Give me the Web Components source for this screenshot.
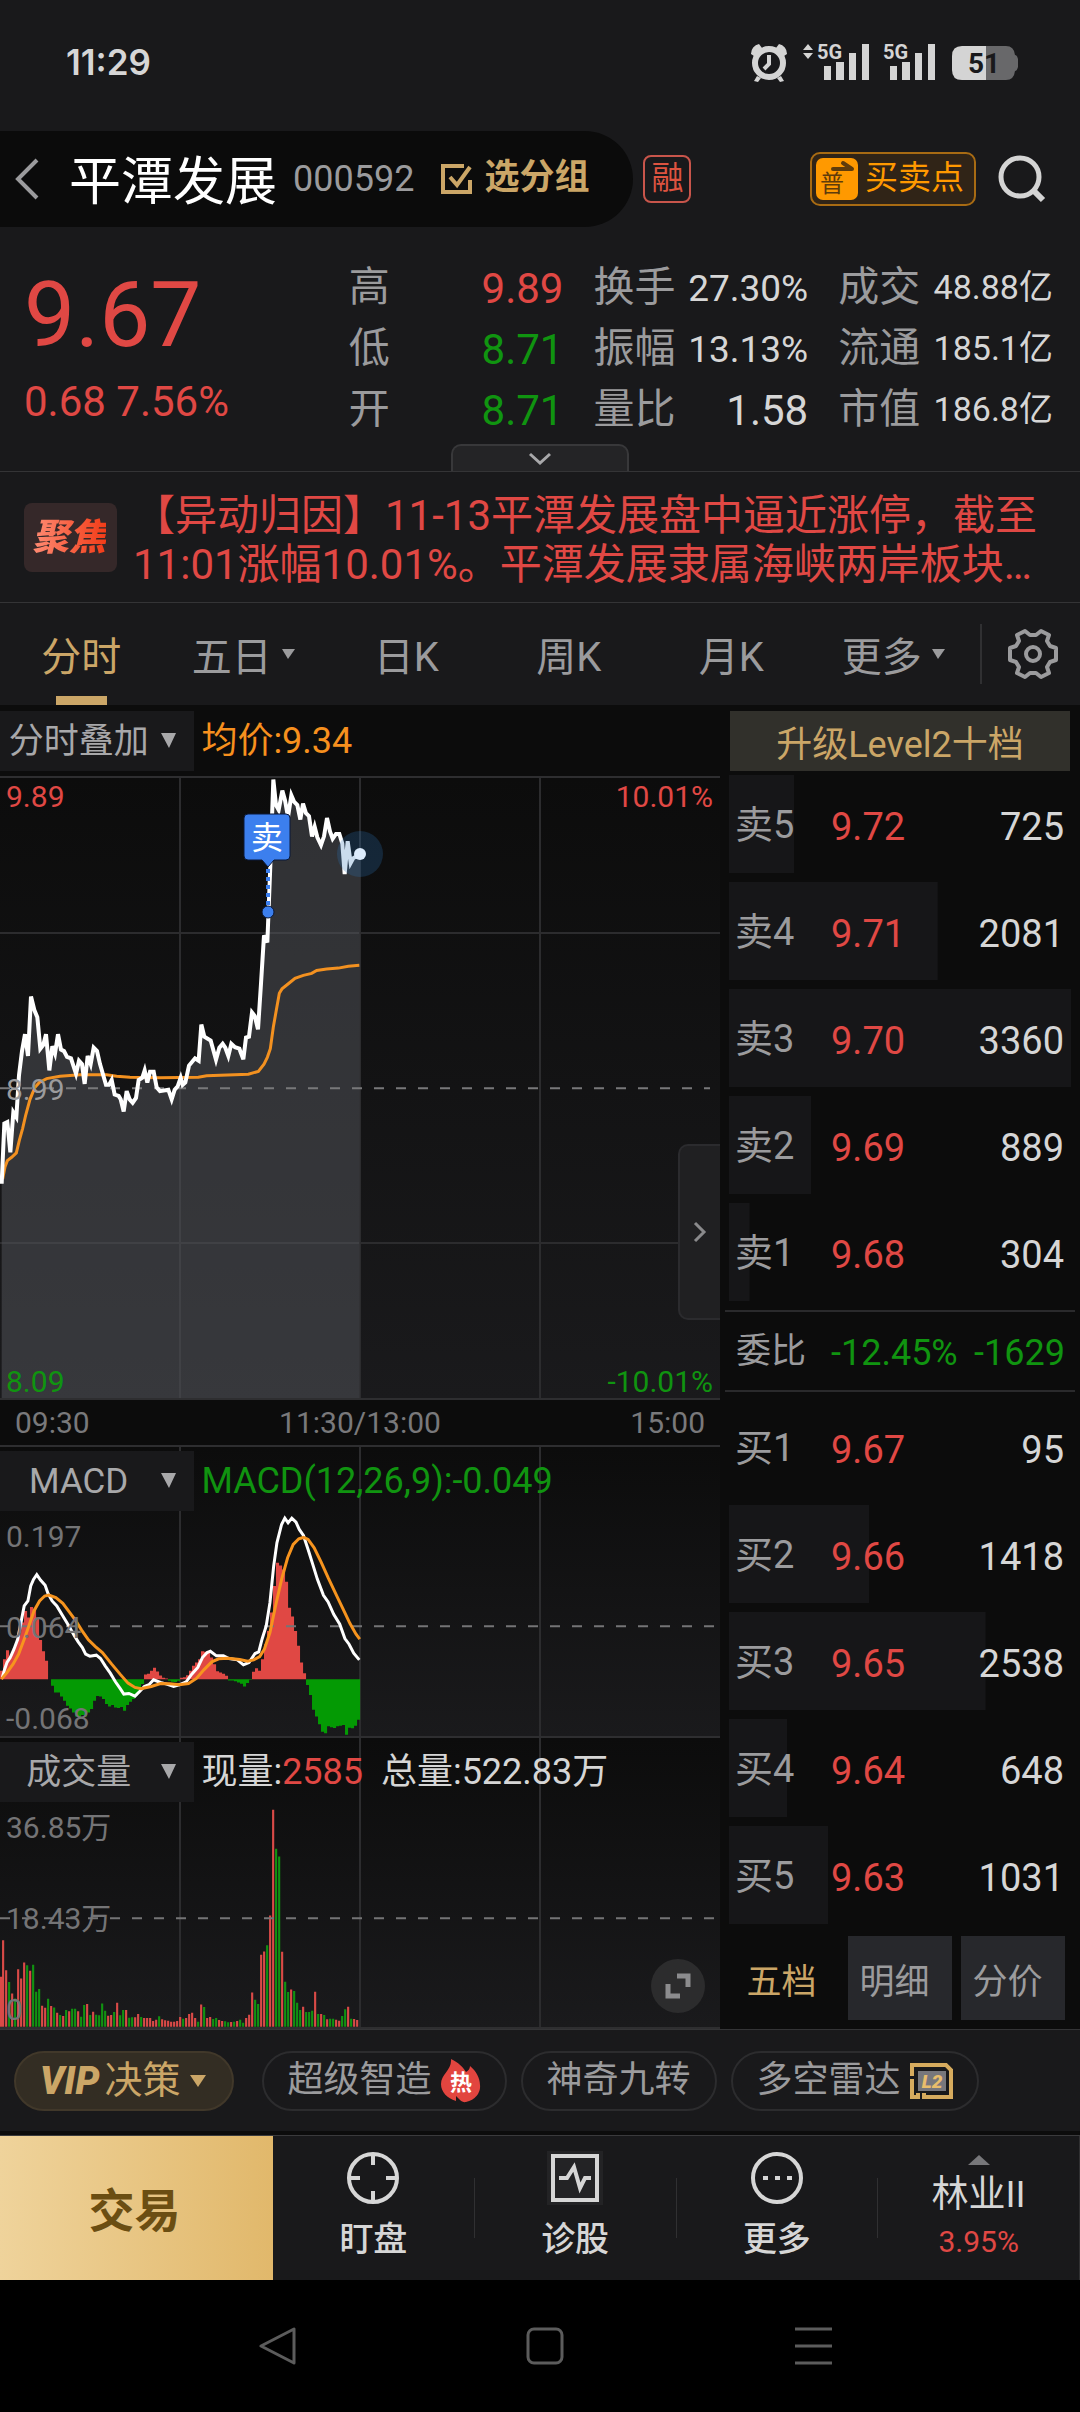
<!DOCTYPE html>
<html lang="zh-CN">
<head>
<meta charset="utf-8">
<meta name="viewport" content="width=device-width, initial-scale=1">
<title>平潭发展 000592</title>
<style>
    html, body {
        margin: 0;
        background: #000;
    }
    body {
        font-family: Roboto, "Noto Sans CJK SC", sans-serif;
        font-size: 36px;
        color: #9b9b9d;
        --panel: #19191b;
        --dark: #0c0c0c;
        --line: #343436;
        --up: #e04844;
        --down: #109410;
        --gold: #cba667;
        --light: #d6d6d6;
    }
</style>
</head>
<body>
<stock-app></stock-app>

<script>
// Base class: clones the markup of the subclass into an open shadow root
class BaseElement extends HTMLElement {
    constructor() {
        super();
        const template = document.createElement('template');
        template.innerHTML = `
            <style>
                * { box-sizing: border-box; }
                button, select {
                    font: inherit;
                    color: inherit;
                    background: none;
                    border: 0;
                    padding: 0;
                    margin: 0;
                }
                svg { display: block; flex: none; }
                .up { color: var(--up); }
                .down { color: var(--down); }
            </style>` + this.markup();
        this.attachShadow({ mode: 'open' });
        this.shadowRoot.appendChild(template.content.cloneNode(true));
    }

    attr(name) {
        return this.getAttribute(name) || '';
    }
}

class StatusBar extends BaseElement {
    markup() {
        return `
            <style>
                :host {
                    display: flex;
                    align-items: center;
                    height: 131px;
                    padding: 0 62px 8px 66px;
                    background: var(--panel);
                    color: var(--light);
                }
                time {
                    flex: 1;
                    font: 600 35px Inter, sans-serif;
                }
            </style>
            <time>11:29</time>
            <svg width="268" height="42" viewBox="750 41 268 42" fill="#d4d4d4">
                <circle cx="769" cy="63" r="14" fill="none" stroke="#d4d4d4" stroke-width="6"/>
                <path d="M751 54a10 10 0 0 1 8-10l3 4-8 8zM787 54a10 10 0 0 0-8-10l-3 4 8 8zM757 76l4 2-3 4-4-1zM781 76l-4 2 3 4 4-1z"/>
                <path d="M769 55v9l-5 5" fill="none" stroke="#d4d4d4" stroke-width="4"/>
                <path d="M803 50l5-6 5 6zM803 53l5 6 5-6z"/>
                <text x="817" y="59" font-family="Roboto" font-weight="700" font-size="20">5G</text>
                <path d="M824 66h7v14h-7zM836 62h8v18h-8zM849 53h7v27h-7zM862 44h7v36h-7z"/>
                <text x="883" y="59" font-family="Roboto" font-weight="700" font-size="20">5G</text>
                <path d="M890 66h7v14h-7zM902 62h8v18h-8zM915 53h7v27h-7zM928 44h7v36h-7z"/>
                <path d="M986 46h20q8 0 9 9 2 0 3 4v8q-1 4-3 4-1 9-9 9h-20z" fill="#68686a"/>
                <path d="M986 46h-24q-10 0-10 10v14q0 10 10 10h24z"/>
                <text x="968" y="73" font-family="Roboto" font-weight="700" font-size="28" fill="#19191b">51</text>
            </svg>`;
    }
}

class StockHeader extends BaseElement {
    markup() {
        return `
            <style>
                :host {
                    display: flex;
                    align-items: center;
                    height: 96px;
                    padding-right: 34px;
                    background: var(--panel);
                }
                .pill {
                    display: flex;
                    align-items: center;
                    height: 96px;
                    padding: 0 44px 0 14px;
                    background: #0b0b0b;
                    border-radius: 0 48px 48px 0;
                }
                h1 {
                    margin: 0 16px 0 29px;
                    padding-bottom: 4px;
                    font-size: 52px;
                    font-weight: 400;
                    color: #fff;
                }
                .group {
                    display: flex;
                    align-items: center;
                    gap: 12px;
                    margin-left: 27px;
                    font-weight: 700;
                    font-size: 35px;
                    line-height: 46px;
                    padding-bottom: 2px;
                    color: var(--gold);
                }
                .margin {
                    width: 48px;
                    height: 48px;
                    margin-left: 10px;
                    line-height: 42px;
                    font-size: 32px;
                    text-align: center;
                    color: #dd5340;
                    border: 2px solid #c8554b;
                    border-radius: 8px;
                }
                .points {
                    display: flex;
                    align-items: center;
                    gap: 7px;
                    height: 54px;
                    margin: 0 22px 0 auto;
                    padding: 0 10px 0 4px;
                    font-size: 33px;
                    line-height: 46px;
                    color: #ff9900;
                    background: #302417;
                    border: 2px solid #a86b13;
                    border-radius: 10px;
                }
                .points span { padding-bottom: 3px; }
            </style>
            <div class="pill">
                <button aria-label="返回">
                    <svg width="26" height="42" fill="none" stroke="#9b9b9d" stroke-width="4"><path d="M23 2L4 21l19 19"/></svg>
                </button>
                <h1>平潭发展</h1>
                <span>000592</span>
                <button class="group">
                    <svg width="31" height="31" fill="none" stroke="#cba667" stroke-width="4"><path d="M23 3H2v26h27V17M9 14l7 8L29 4"/></svg>
                    选分组
                </button>
            </div>
            <span class="margin">融</span>
            <button class="points">
                <svg width="42" height="42">
                    <rect width="42" height="42" rx="7" fill="#ff9900"/>
                    <path d="M17 11h19L27 5" fill="none" stroke="#5f3c0b" stroke-width="4" stroke-linecap="round" stroke-linejoin="round"/>
                    <text x="4" y="34" font-family="Noto Sans CJK SC" font-size="24" fill="#5f3c0b">普</text>
                </svg>
                <span>买卖点</span>
            </button>
            <button aria-label="搜索">
                <svg width="48" height="48" fill="none" stroke="#d4d4d4" stroke-width="5"><circle cx="22" cy="22" r="19"/><path d="M35 35l10 10" stroke-width="6"/></svg>
            </button>`;
    }
}

class QuoteCell extends BaseElement {
    markup() {
        return `
            <style>
                :host {
                    display: flex;
                    justify-content: space-between;
                    align-items: center;
                    height: 61px;
                    font-size: 41px;
                    line-height: 48px;
                    white-space: nowrap;
                }
                .label { padding-bottom: 4px; }
                .value { color: var(--light); font-size: 42px; }
                .value.medium { font-size: 37px; }
                .value.small { font-size: 34px; padding-bottom: 4px; }
                .value.up { color: var(--up); }
                .value.down { color: var(--down); }
            </style>
            <span class="label">${this.attr('label')}</span>
            <span class="value ${this.attr('kind')}"><slot></slot></span>`;
    }
}

class QuotePanel extends BaseElement {
    markup() {
        return `
            <style>
                :host {
                    display: block;
                    padding-top: 31px;
                    background: var(--panel);
                    border-bottom: 1px solid var(--line);
                }
                .grid {
                    display: grid;
                    grid-template-columns: 295fr 215fr 215fr 215fr;
                    gap: 30px;
                    padding: 0 27px 0 24px;
                }
                .price {
                    padding-top: 12px;
                    font-size: 91px;
                    line-height: 90px;
                    color: var(--up);
                }
                .change {
                    margin-top: 17px;
                    font-size: 42px;
                    line-height: 50px;
                    white-space: nowrap;
                    color: var(--up);
                }
                .more {
                    display: flex;
                    align-items: center;
                    justify-content: center;
                    width: 178px;
                    height: 27px;
                    margin: 3px auto 0;
                    background: #242426;
                    border: 2px solid #38383a;
                    border-bottom: 0;
                    border-radius: 10px 10px 0 0;
                }
            </style>
            <div class="grid">
                <div>
                    <div class="price">9.67</div>
                    <div class="change">0.68 7.56%</div>
                </div>
                <div>
                    <quote-cell label="高" kind="up">9.89</quote-cell>
                    <quote-cell label="低" kind="down">8.71</quote-cell>
                    <quote-cell label="开" kind="down">8.71</quote-cell>
                </div>
                <div>
                    <quote-cell label="换手" kind="medium">27.30%</quote-cell>
                    <quote-cell label="振幅" kind="medium">13.13%</quote-cell>
                    <quote-cell label="量比">1.58</quote-cell>
                </div>
                <div>
                    <quote-cell label="成交" kind="small">48.88亿</quote-cell>
                    <quote-cell label="流通" kind="small">185.1亿</quote-cell>
                    <quote-cell label="市值" kind="small">186.8亿</quote-cell>
                </div>
            </div>
            <button class="more" aria-label="展开">
                <svg width="24" height="14" fill="none" stroke="#a8a8aa" stroke-width="3"><path d="M2 2l10 9 10-9"/></svg>
            </button>`;
    }
}

class NewsStrip extends BaseElement {
    markup() {
        return `
            <style>
                :host {
                    display: flex;
                    align-items: center;
                    gap: 16px;
                    height: 131px;
                    padding: 0 24px;
                    background: var(--panel);
                    border-bottom: 1px solid var(--line);
                }
                .badge {
                    flex: none;
                    width: 93px;
                    line-height: 69px;
                    padding-right: 3px;
                    text-align: center;
                    font-size: 37px;
                    font-weight: 900;
                    font-style: italic;
                    background: #352829;
                    border-radius: 8px;
                }
                .badge span {
                    background: linear-gradient(90deg, #ff8c74, #f23c18);
                    -webkit-background-clip: text;
                    background-clip: text;
                    color: transparent;
                }
                a {
                    flex: 1;
                    padding-top: 5px;
                    font-size: 42px;
                    line-height: 49px;
                    white-space: nowrap;
                    text-decoration: none;
                    color: var(--up);
                }
            </style>
            <span class="badge"><span>聚焦</span></span>
            <a href="#news">【异动归因】11-13平潭发展盘中逼近涨停，截至<br>11:01涨幅10.01%。平潭发展隶属海峡两岸板块…</a>`;
    }
}

class PeriodTabs extends BaseElement {
    markup() {
        return `
            <style>
                :host {
                    display: flex;
                    align-items: stretch;
                    height: 102px;
                    padding-right: 20px;
                    background: var(--panel);
                }
                .tabs {
                    flex: 1;
                    display: flex;
                    padding-right: 5px;
                    font-size: 40px;
                }
                .tabs button {
                    flex: 1;
                    display: flex;
                    align-items: center;
                    justify-content: center;
                    gap: 10px;
                    padding-top: 9px;
                    border: 0 solid transparent;
                    border-bottom-width: 9px;
                }
                .tabs .active {
                    color: var(--gold);
                    border-image: linear-gradient(90deg, transparent 36%, var(--gold) 36%, var(--gold) 64%, transparent 64%) 9;
                }
                .set {
                    align-self: center;
                    height: 60px;
                    padding-left: 24px;
                    border-left: 2px solid #303032;
                }
            </style>
            <div class="tabs" role="tablist">
                <button role="tab" class="active" aria-selected="true">分时</button>
                <button role="tab">五日<svg width="14" height="10" fill="#9b9b9d"><path d="M0 0h13L6 10z"/></svg></button>
                <button role="tab">日K</button>
                <button role="tab">周K</button>
                <button role="tab">月K</button>
                <button role="tab">更多<svg width="14" height="10" fill="#9b9b9d"><path d="M0 0h13L6 10z"/></svg></button>
            </div>
            <button class="set" aria-label="设置">
                <svg width="54" height="54" viewBox="-27 -27 54 54" fill="none" stroke="#9b9b9d" stroke-width="4" stroke-linejoin="round">
                    <path d="M23 -6L23 6L17 8L14 13L16 19L8 23L3 19L-3 19L-8 23L-16 19L-14 13L-17 8L-23 6L-23 -6L-17 -8L-14 -13L-16 -19L-8 -23L-3 -19L3 -19L8 -23L16 -19L14 -13L17 -8Z"/>
                    <circle r="7"/>
                </svg>
            </button>`;
    }
}

// Drop-down at the left of each chart, with the readings beside it
class ChartHead extends BaseElement {
    markup() {
        return `
            <style>
                :host {
                    display: flex;
                    align-items: center;
                    height: 60px;
                    position: relative;
                }
                label {
                    flex: 0 0 27%;
                    display: flex;
                    align-items: center;
                    align-self: stretch;
                    padding-right: 18px;
                    margin-right: 7px;
                    background: var(--panel);
                }
                select {
                    flex: 1;
                    height: 60px;
                    padding-right: 4px;
                    appearance: none;
                    text-align: center;
                    text-align-last: center;
                    font-size: 35px;
                    color: #a8a8aa;
                }
                .text { white-space: pre; line-height: 60px; }
            </style>
            <label>
                <select aria-label="指标"><option>${this.attr('name')}</option></select>
                <svg width="15" height="16" fill="#a8a8aa"><path d="M0 0h15L8 15z"/></svg>
            </label>
            <span class="text"><slot></slot></span>`;
    }
}

const GRID = `
    <path d="M25 0V100M50 0V100M75 0V100" stroke="#2c2c2e" stroke-width="2" vector-effect="non-scaling-stroke"/>`;

class PriceChart extends BaseElement {
    markup() {
        const price = '5,1000 13,875 22,872 31,935 40,852 49,862 57,775 66,725 75,690 84,735 93,612 103,640 112,655 121,720 130,712 138,690 148,765 157,715 165,730 174,690 183,722 192,725 201,737 213,740 228,772 237,745 246,752 254,793 263,735 272,752 281,718 291,725 300,752 318,795 327,795 335,785 344,815 356,818 362,825 371,850 380,808 389,825 398,832 408,822 416,785 427,780 434,765 442,790 450,768 461,768 470,800 480,808 505,805 515,825 524,805 533,798 542,780 548,795 556,790 567,755 585,740 596,745 604,670 613,695 632,703 648,743 658,718 668,710 676,718 685,735 694,710 705,717 718,720 730,742 738,697 747,695 756,645 764,652 774,680 783,585 792,485 802,500 811,340 820,162 828,215 836,225 847,185 855,205 864,240 874,195 882,208 892,215 901,245 909,212 918,232 927,238 936,280 944,260 952,282 963,298 972,280 981,242 990,270 998,285 1008,275 1018,275 1027,295 1034,358 1043,290 1052,335 1060,325 1078,318';
        const average = '8,990 15,965 22,952 35,945 49,936 58,910 68,885 77,858 90,825 105,800 118,790 140,782 180,777 240,774 320,774 350,777 390,779 480,780 595,779 620,776 745,773 775,767 792,752 802,738 811,720 820,675 829,640 838,605 846,596 864,586 885,574 910,568 935,564 950,558 980,555 1015,553 1045,549 1078,547';
        return `
            <style>
                :host { display: block; padding: 6px 0 0; }
                .plot {
                    position: relative;
                    display: flex;
                    flex-direction: column;
                    justify-content: space-between;
                    height: 624px;
                    margin-top: 5px;
                    padding: 3px 7px 0 6px;
                    font-size: 30px;
                    line-height: 32px;
                    background: linear-gradient(#0c0c0c, #1a1a1c);
                    border-top: 2px solid #2e2e30;
                    border-bottom: 2px solid #2e2e30;
                }
                .plot > svg { position: absolute; left: 0; top: 0; width: 100%; height: 100%; }
                .row { display: flex; justify-content: space-between; position: relative; }
                .plot > .flag { left: calc(37% - 23px); top: 35px; width: 50px; height: 110px; }
                .plot > .now { left: calc(50% - 23px); top: 53px; width: 46px; height: 46px; }
                .side {
                    position: absolute;
                    right: 0;
                    bottom: 78px;
                    display: flex;
                    align-items: center;
                    justify-content: center;
                    width: 42px;
                    height: 176px;
                    background: #202022;
                    border: 2px solid #2b2b2e;
                    border-right: 0;
                    border-radius: 10px 0 0 10px;
                }
                .axis {
                    display: grid;
                    grid-template-columns: 1fr auto 1fr;
                    padding: 1px 15px 0;
                    font-size: 30px;
                    line-height: 44px;
                    color: #79797b;
                }
                .axis span:last-child { text-align: right; }
            </style>
            <chart-head name="分时叠加"><span style="color: #f7901e">均价:9.34</span></chart-head>
            <div class="plot">
                <svg viewBox="0 0 100 100" preserveAspectRatio="none" fill="none">
                    ${GRID}
                    <path d="M0 25H100M0 75H100" stroke="#2c2c2e" stroke-width="2" vector-effect="non-scaling-stroke"/>
                </svg>
                <svg viewBox="0 159 2160 1285" preserveAspectRatio="none" fill="none">
                    <polygon points="${price} 1078,1444 5,1444" fill="#54555c" opacity=".5"/>
                    <line x1="0" y1="802" x2="2130" y2="802" stroke="#78787a" stroke-width="2" stroke-dasharray="10 12" vector-effect="non-scaling-stroke"/>
                    <polyline points="${average}" stroke="#f39120" stroke-width="3" vector-effect="non-scaling-stroke"/>
                    <polyline points="${price}" stroke="#fff" stroke-width="4" vector-effect="non-scaling-stroke"/>
                </svg>
                <svg class="flag">
                    <path d="M25 48v44" stroke="#3c7fee" stroke-width="4" stroke-dasharray="4 4"/>
                    <path d="M5 1h38a4 4 0 0 1 4 4v38a4 4 0 0 1-4 4H31l-6 7-6-7H5a4 4 0 0 1-4-4V5a4 4 0 0 1 4-4z" fill="#3c7fee" stroke="#0a1838"/>
                    <circle cx="25" cy="99" r="6" fill="#3c7fee" stroke="#0a1838"/>
                    <text x="24" y="36" text-anchor="middle" font-family="Noto Sans CJK SC" font-size="32" fill="#fff">卖</text>
                </svg>
                <svg class="now">
                    <circle cx="23" cy="23" r="23" fill="#2b74b8" opacity=".25"/>
                    <circle cx="23" cy="23" r="6" fill="#dcebfb"/>
                </svg>
                <div class="row"><span class="up">9.89</span><span class="up">10.01%</span></div>
                <div class="row"><span>8.99</span></div>
                <div class="row"><span class="down">8.09</span><span class="down">-10.01%</span></div>
                <button class="side" aria-label="收起">
                    <svg width="14" height="22" fill="none" stroke="#8a8a8c" stroke-width="3"><path d="M2 2l9 9-9 9"/></svg>
                </button>
            </div>
            <div class="axis"><span>09:30</span><span>11:30/13:00</span><span>15:00</span></div>`;
    }
}

// Shared frame of the two lower charts: head, scale labels and a drawing underneath
const PANEL_STYLE = `
    <style>
        :host {
            position: relative;
            display: flex;
            flex-direction: column;
            height: 291px;
            padding-top: 4px;
            background: linear-gradient(#0c0c0c, #1a1a1c);
            border-top: 2px solid #2e2e30;
        }
        .draw { position: absolute; left: 0; top: 0; width: 100%; height: 100%; }
        .scale {
            position: relative;
            flex: 1;
            display: flex;
            flex-direction: column;
            justify-content: space-between;
            padding: 10px 6px 1px;
            font-size: 30px;
            line-height: 32px;
            color: #747476;
        }
    </style>`;

class MacdChart extends BaseElement {
    markup() {
        const bars = [
            25, 60, 87, 65, 85, 110, 135, 170, 205, 185, 217, 212, 185, 118, 84, 55, 0, -20, -40, -40,
            -52, -65, -80, -88, -100, -112, -115, -108, -112, -100, -90, -65, -51, -52, -60, -75, -82, -78, -85, -87,
            -84, -95, -78, -68, -60, -50, -35, -15, 14, 16, 25, 34, 23, 11, 4, 2, -5, -8, -9, -5,
            4, 6, 12, 25, 40, 50, 60, 84, 82, 80, 65, 45, 24, 20, 16, 10, -4, -4, -6, -10,
            -14, -22, -12, -2, 22, 33, 25, 60, 105, 145, 200, 280, 350, 342, 330, 293, 215, 188, 145, 100,
            50, 18, -18, -48, -92, -112, -136, -158, -163, -142, -145, -147, -142, -140, -138, -167, -146, -148, -140, -122
        ];
        const step = 1547 / 240;
        let up = '';
        let down = '';
        bars.forEach((v, i) => {
            const bar = `M${(i * step).toFixed(1)} 720v${-v}h6.6v${v}z`;
            if (v > 0) up += bar; else down += bar;
        });
        return PANEL_STYLE + `
            <svg class="draw" viewBox="0 0 100 100" preserveAspectRatio="none">${GRID}</svg>
            <svg class="draw" viewBox="0 22 1547 869" preserveAspectRatio="none" fill="none">
                <path d="${up}" fill="#e04844"/>
                <path d="${down}" fill="#049a04"/>
                <line x1="0" y1="561" x2="1535" y2="561" stroke="#747476" stroke-width="2" stroke-dasharray="10 12" vector-effect="non-scaling-stroke"/>
                <polyline stroke="#fff" stroke-width="3" vector-effect="non-scaling-stroke" points="5,715 10,690 15,670 22,655 30,630 38,600 45,550 52,500 60,485 66,440 72,420 79,406 87,422 97,438 103,462 112,485 122,500 135,530 148,560 160,590 168,608 177,625 184,645 193,651 207,648 216,658 226,680 237,702 248,728 258,748 266,765 277,763 290,771 300,757 310,742 320,737 330,722 345,730 358,735 373,742 385,737 400,728 412,705 425,685 435,655 445,640 452,636 465,650 480,650 492,658 510,662 523,677 535,670 548,643 556,638 563,600 572,560 580,490 588,380 595,310 605,255 612,236 619,250 627,236 636,248 643,270 652,288 662,330 672,375 682,420 695,468 705,488 717,525 730,555 741,598 750,615 760,642 772,662"/>
                <polyline stroke="#f7941e" stroke-width="3" vector-effect="non-scaling-stroke" points="3,720 15,700 28,675 40,645 52,600 62,560 73,515 85,485 96,470 105,467 120,475 135,492 150,520 163,545 175,572 190,602 205,622 220,640 240,675 258,705 275,732 290,745 303,749 325,742 345,733 365,734 385,737 405,733 422,718 438,692 455,668 470,659 490,657 515,661 532,666 545,662 558,652 568,630 580,580 592,500 605,420 618,355 630,315 642,298 652,294 662,300 675,325 690,368 705,415 722,465 738,512 752,553 765,585 773,600"/>
            </svg>
            <chart-head name="MACD"><span style="color: var(--down)">MACD(12,26,9):-0.049</span></chart-head>
            <div class="scale"><span>0.197</span><span>0.064</span><span>-0.068</span></div>`;
    }
}

class VolumeChart extends BaseElement {
    markup() {
        // minute volumes, g marks a falling minute
        const bars = `150 260 170 134g 100 85g 173 145 193 185g 168 186g 105g 113g 63 57 84g 62 58g 42
            35g 32 50g 46 54g 54g 46 30g 65g 68 35g 45 36g 34g 70g 48g 33 35 44g 72
            34g 50g 50 27g 28g 28 38 29g 26 26 26 17 21 31g 22 19 18 15 15 17
            29 24g 26 38 42 26 15g 67 59g 26 29 23g 26g 20 17 16g 13g 14 15g 17
            21g 12g 26 36 103 81g 68g 216 226 245g 334 652 535g 512g 225 135g 104g 112 107g 72g
            50g 60 44g 44g 48g 105 38g 38 35g 22 24g 24g 21 18 32g 52g 60 24g 23 20`.split(/\s+/);
        const step = 1547 / 240;
        let up = '';
        let down = '';
        bars.forEach((b, i) => {
            const v = parseInt(b, 10);
            const bar = `M${Math.max(0, i * step - 2).toFixed(1)} 893v${-v}h4.6v${v}z`;
            if (b.endsWith('g')) down += bar; else up += bar;
        });
        return PANEL_STYLE + `
            <style>
                :host { height: 293px; border-bottom: 2px solid #2e2e30; }
                .zoom {
                    position: absolute;
                    right: 15px;
                    bottom: 14px;
                    display: flex;
                    align-items: center;
                    justify-content: center;
                    width: 54px;
                    height: 54px;
                    background: #2c2c2d;
                    border-radius: 50%;
                }
            </style>
            <svg class="draw" viewBox="0 0 100 100" preserveAspectRatio="none">${GRID}</svg>
            <svg class="draw" viewBox="0 25 1547 869" preserveAspectRatio="none" fill="none">
                <path d="${up}" fill="#d94a47"/>
                <path d="${down}" fill="#119211"/>
                <line x1="0" y1="567" x2="1535" y2="567" stroke="#747476" stroke-width="2" stroke-dasharray="10 12" vector-effect="non-scaling-stroke"/>
            </svg>
            <chart-head name="成交量"><span style="color: var(--light)">现量:<span style="color: var(--up)">2585</span>  总量:522.83万</span></chart-head>
            <div class="scale"><span>36.85万</span><span>18.43万</span><span>0</span></div>
            <button class="zoom" aria-label="全屏">
                <svg width="26" height="26" fill="none" stroke="#8c8c8e" stroke-width="5"><path d="M12 3h11v11M3 11v12h12"/></svg>
            </button>`;
    }
}

class OrderRow extends BaseElement {
    markup() {
        return `
            <style>
                :host {
                    display: grid;
                    grid-template-columns: 96px 1fr auto;
                    align-items: center;
                    height: 98px;
                    margin-bottom: 9px;
                    padding: 6px 7px 0 6px;
                    font-size: 38px;
                    line-height: 46px;
                    background: linear-gradient(#161618, #161618) no-repeat left / ${this.attr('depth')}% 100%;
                }
                .label { padding-bottom: 4px; }
                .volume { color: var(--light); }
            </style>
            <span class="label">${this.attr('label')}</span>
            <span class="up">${this.attr('price')}</span>
            <span class="volume">${this.attr('volume')}</span>`;
    }
}

class OrderBook extends BaseElement {
    markup() {
        return `
            <style>
                :host {
                    display: flex;
                    flex-direction: column;
                    padding: 6px 5px 0;
                }
                .level2 {
                    height: 60px;
                    margin: 0 5px 4px;
                    color: var(--gold);
                    background: #31302b;
                }
                .rows { margin: 0 4px; }
                .ratio {
                    display: grid;
                    grid-template-columns: 95px 1fr auto;
                    align-items: center;
                    height: 82px;
                    margin-bottom: 6px;
                    padding: 4px 10px 0 11px;
                    line-height: 44px;
                    color: var(--down);
                    border-top: 2px solid #2a2a2c;
                    border-bottom: 2px solid #2a2a2c;
                }
                .ratio span:first-child { color: #9b9b9d; font-size: 35px; padding-bottom: 3px; }
                nav {
                    display: flex;
                    gap: 9px;
                    margin: 3px 10px 0;
                }
                nav button {
                    flex: 1;
                    height: 84px;
                    padding-right: 11px;
                    font-size: 35px;
                    background: #27282c;
                }
                nav .active { color: var(--gold); background: none; }
            </style>
            <button class="level2">升级Level2十档</button>
            <div class="rows">
                <order-row label="卖5" price="9.72" volume="725" depth="19"></order-row>
                <order-row label="卖4" price="9.71" volume="2081" depth="61"></order-row>
                <order-row label="卖3" price="9.70" volume="3360" depth="100"></order-row>
                <order-row label="卖2" price="9.69" volume="889" depth="24"></order-row>
                <order-row label="卖1" price="9.68" volume="304" depth="6"></order-row>
            </div>
            <div class="ratio"><span>委比</span><span>-12.45%</span><span>-1629</span></div>
            <div class="rows">
                <order-row label="买1" price="9.67" volume="95" depth="0"></order-row>
                <order-row label="买2" price="9.66" volume="1418" depth="41"></order-row>
                <order-row label="买3" price="9.65" volume="2538" depth="75"></order-row>
                <order-row label="买4" price="9.64" volume="648" depth="17"></order-row>
                <order-row label="买5" price="9.63" volume="1031" depth="29"></order-row>
            </div>
            <nav>
                <button class="active">五档</button>
                <button>明细</button>
                <button>分价</button>
            </nav>`;
    }
}

class ToolPill extends BaseElement {
    markup() {
        return `
            <style>
                button {
                    display: flex;
                    align-items: center;
                    gap: 9px;
                    height: 60px;
                    padding: 0 24px;
                    line-height: 46px;
                    white-space: nowrap;
                    border: 2px solid #2c2c2e;
                    border-radius: 30px;
                }
                :host([vip]) button {
                    gap: 5px;
                    font-size: 38px;
                    color: var(--gold);
                    background: #332d23;
                    border-color: #41382a;
                }
            </style>
            <button><slot></slot></button>`;
    }
}

class ToolPills extends BaseElement {
    markup() {
        return `
            <style>
                :host {
                    display: flex;
                    gap: 14px;
                    padding: 21px 14px 20px;
                    background: var(--panel);
                    border-bottom: 4px solid var(--dark);
                }
                [vip] { margin-right: 14px; }
                span { padding-bottom: 3px; }
                b { font-style: italic; font-weight: 900; }
            </style>
            <tool-pill vip><b>VIP</b><span>决策</span><svg width="22" height="12" fill="#cba667"><path d="M4 0h16l-8 12z"/></svg></tool-pill>
            <tool-pill><span>超级智造</span><svg width="40" height="44">
                <path d="M10 0c8 4 12 8 15 13 2-1 4-3 4-6 6 5 10 12 10 19a19 16 0 0 1-14 17c-4 1-7-3-10-6v5C6 39 0 33 0 25 0 15 11 11 10 0z" fill="#e2453f"/>
                <text x="20" y="31" text-anchor="middle" font-family="Noto Sans CJK SC" font-weight="700" font-size="22" fill="#fff">热</text>
            </svg></tool-pill>
            <tool-pill><span>神奇九转</span></tool-pill>
            <tool-pill><span>多空雷达</span><svg width="43" height="36">
                <path d="M2 13V2h34l5 5v27H14v-4M2 16v18h6v-4" fill="none" stroke="#d6ab5e" stroke-width="4"/>
                <rect x="8" y="8" width="28" height="20" fill="#77777c"/>
                <text x="22" y="25" text-anchor="middle" font-family="Roboto" font-style="italic" font-weight="900" font-size="19" fill="#e8bd6c">L2</text>
            </svg></tool-pill>`;
    }
}

class BarItem extends BaseElement {
    markup() {
        return `
            <style>
                :host {
                    flex: 1;
                    display: flex;
                    align-items: center;
                    border-right: 1px solid transparent;
                    border-image: linear-gradient(transparent 42px, #303032 42px, #303032 102px, transparent 102px) 1;
                }
                button {
                    flex: 1;
                    display: flex;
                    flex-direction: column;
                    align-items: center;
                    gap: 12px;
                    padding-bottom: 5px;
                    color: var(--light);
                    font-size: 34px;
                    line-height: 44px;
                    font-weight: 500;
                }
            </style>
            <button><slot name="icon"></slot><span><slot></slot></span></button>`;
    }
}

class TradeBar extends BaseElement {
    markup() {
        return `
            <style>
                :host {
                    display: flex;
                    height: 145px;
                    background: var(--panel);
                    border-top: 1px solid #3a3a3c;
                }
                .trade {
                    width: 273px;
                    padding: 0 4px 3px 0;
                    font-size: 46px;
                    font-weight: 700;
                    color: #6b4e12;
                    background: linear-gradient(90deg, #efd39b, #e1b86b);
                }
                .sector {
                    flex: 1;
                    display: flex;
                    flex-direction: column;
                    align-items: center;
                    padding-top: 19px;
                    color: var(--light);
                    font-size: 37px;
                    line-height: 60px;
                    border-right: 1px solid #303032;
                }
                .sector .up { font-size: 30px; line-height: 34px; }
            </style>
            <button class="trade">交易</button>
            <bar-item><svg slot="icon" width="54" height="54" fill="none" stroke="#d6d6d6" stroke-width="4"><circle cx="27" cy="27" r="24"/><path d="M27 3v11M27 40v11M3 27h11M40 27h11"/></svg>盯盘</bar-item>
            <bar-item><svg slot="icon" width="56" height="54" fill="none" stroke="#d6d6d6" stroke-width="4"><path d="M0 0h56v54H0z" fill="#232325" stroke="none"/><path d="M6 5h44v44H6zM12 27h8l7-11 6 21 5-10h6"/></svg>诊股</bar-item>
            <bar-item><svg slot="icon" width="54" height="54" fill="none" stroke="#d6d6d6" stroke-width="4"><circle cx="27" cy="27" r="24"/><path d="M13 27h5M25 27h5M37 27h5"/></svg>更多</bar-item>
            <button class="sector"><svg width="22" height="10" fill="#77777a"><path d="M11 0l11 10H0z"/></svg>林业II<span class="up">3.95%</span></button>`;
    }
}

class NavKeys extends BaseElement {
    markup() {
        return `
            <style>
                :host {
                    display: flex;
                    justify-content: space-between;
                    align-items: center;
                    height: 132px;
                    padding: 0 23% 0 24%;
                    background: #000;
                }
            </style>
            <button aria-label="后退"><svg width="37" height="38" fill="none" stroke="#5c5c5c" stroke-width="3" stroke-linejoin="round"><path d="M35 2v34L2 19z"/></svg></button>
            <button aria-label="主页"><svg width="38" height="38" fill="none" stroke="#5c5c5c" stroke-width="3"><rect x="2" y="2" width="34" height="34" rx="6"/></svg></button>
            <button aria-label="任务"><svg width="37" height="38" stroke="#5c5c5c" stroke-width="3"><path d="M0 2h37M0 19h37M0 36h37"/></svg></button>`;
    }
}

class StockApp extends BaseElement {
    markup() {
        return `
            <style>
                :host { display: block; }
                main {
                    display: grid;
                    grid-template-columns: 2fr 1fr;
                    background: var(--dark);
                    border-bottom: 1px solid var(--line);
                }
            </style>
            <status-bar></status-bar>
            <stock-header></stock-header>
            <quote-panel></quote-panel>
            <news-strip></news-strip>
            <period-tabs></period-tabs>
            <main>
                <div>
                    <price-chart></price-chart>
                    <macd-chart></macd-chart>
                    <volume-chart></volume-chart>
                </div>
                <order-book></order-book>
            </main>
            <tool-pills></tool-pills>
            <trade-bar></trade-bar>
            <nav-keys></nav-keys>`;
    }

    connectedCallback() {
        const tabs = this.shadowRoot.querySelector('period-tabs').shadowRoot;
        tabs.querySelectorAll('[role=tab]').forEach(tab => {
            tab.addEventListener('click', () => {
                tabs.querySelector('.active').classList.remove('active');
                tab.classList.add('active');
            });
        });
    }
}

window.customElements.define('status-bar', StatusBar);
window.customElements.define('stock-header', StockHeader);
window.customElements.define('quote-cell', QuoteCell);
window.customElements.define('quote-panel', QuotePanel);
window.customElements.define('news-strip', NewsStrip);
window.customElements.define('period-tabs', PeriodTabs);
window.customElements.define('chart-head', ChartHead);
window.customElements.define('price-chart', PriceChart);
window.customElements.define('macd-chart', MacdChart);
window.customElements.define('volume-chart', VolumeChart);
window.customElements.define('order-row', OrderRow);
window.customElements.define('order-book', OrderBook);
window.customElements.define('tool-pill', ToolPill);
window.customElements.define('tool-pills', ToolPills);
window.customElements.define('bar-item', BarItem);
window.customElements.define('trade-bar', TradeBar);
window.customElements.define('nav-keys', NavKeys);
// the app goes last, its parts are all known by then
window.customElements.define('stock-app', StockApp);
</script>
</body>
</html>
